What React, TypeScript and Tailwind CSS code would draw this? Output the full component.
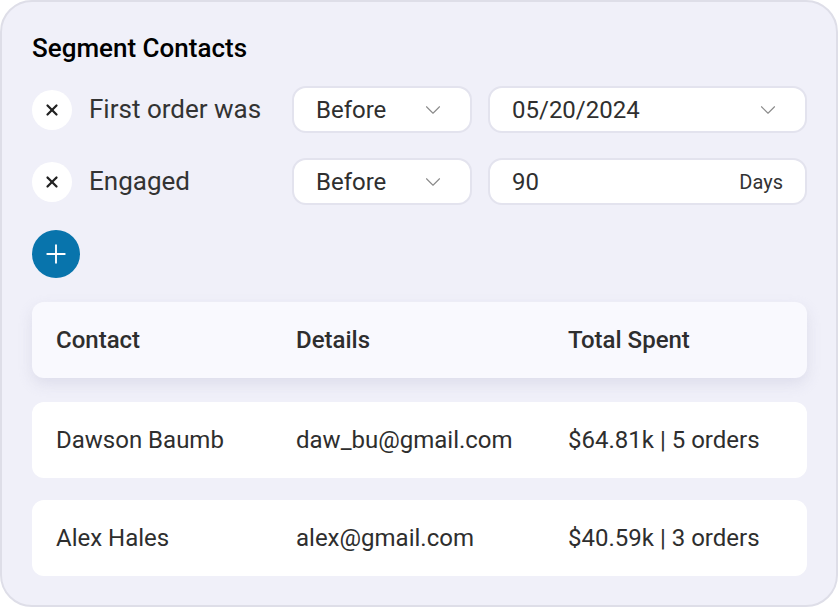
import { ChevronDown, Plus, X } from "lucide-react";

const rows = [
  { name: "Dawson Baumb", email: "daw_bu@gmail.com", spent: "$64.81k | 5 orders" },
  { name: "Alex Hales", email: "alex@gmail.com", spent: "$40.59k | 3 orders" },
];

const Field = ({ className, children }: { className: string; children: React.ReactNode }) => (
  <div
    className={`h-[47px] shrink-0 flex items-center justify-between bg-white border-2 border-[#e3e3ee] rounded-[14px] pl-[22px] pr-[22px] text-[24px] text-[#2f2f2f] ${className}`}
  >
    {children}
  </div>
);

const FilterRow = ({ label, right }: { label: string; right: React.ReactNode }) => (
  <div className="flex items-center h-[47px]">
    <button className="w-10 h-10 shrink-0 rounded-full bg-white flex items-center justify-center text-[#222]">
      <X size={18} strokeWidth={3} />
    </button>
    <span className="ml-[17px] w-[203px] shrink-0 text-[26px] text-[#333]">{label}</span>
    <Field className="w-[180px]">
      <span>Before</span>
      <ChevronDown size={26} strokeWidth={1} className="text-[#8a8a8a] mr-[2px]" />
    </Field>
    <div className="ml-[16px]">{right}</div>
  </div>
);

export default function App() {
  return (
    <div
      className="w-[840px] h-[608px] bg-white"
      style={{ fontFamily: "Roboto, 'Liberation Sans', sans-serif" }}
    >
      <div className="w-[838px] h-[607px] bg-[#f0f0f9] border-2 border-[#dedee8] rounded-[32px] pl-[30px] pr-[29px] pt-[31px]">
        <h1 className="text-[26px] font-medium text-black leading-[30px]">Segment Contacts</h1>

        <div className="mt-[23px] flex flex-col gap-[25px]">
          <FilterRow
            label="First order was"
            right={
              <Field className="w-[319px]">
                <span>05/20/2024</span>
                <ChevronDown size={26} strokeWidth={1} className="text-[#8a8a8a] mr-[2px]" />
              </Field>
            }
          />
          <FilterRow
            label="Engaged"
            right={
              <Field className="w-[319px]">
                <span>90</span>
                <span className="text-[20px] text-[#333]">Days</span>
              </Field>
            }
          />
        </div>

        <button className="mt-[25px] w-12 h-12 rounded-full bg-[#0874ac] flex items-center justify-center text-white">
          <Plus size={30} strokeWidth={1.5} />
        </button>

        <div className="mt-[24px] flex flex-col gap-[22px]">
          <div className="h-[76px] bg-[#f9f9fe] rounded-[12px] shadow-[0_6px_14px_rgba(200,200,220,0.45)] grid grid-cols-[240px_272px_1fr] items-center px-6 text-[24px] font-medium text-[#2e2e2e]">
            <span>Contact</span>
            <span>Details</span>
            <span>Total Spent</span>
          </div>
          <div className="flex flex-col gap-[22px] mt-[2px]">
            {rows.map((r) => (
              <div
                key={r.name}
                className="h-[76px] bg-white rounded-[12px] grid grid-cols-[240px_272px_1fr] items-center px-6 text-[24px] text-[#2e2e2e]"
              >
                <span>{r.name}</span>
                <span>{r.email}</span>
                <span>{r.spent}</span>
              </div>
            ))}
          </div>
        </div>
      </div>
    </div>
  );
}
